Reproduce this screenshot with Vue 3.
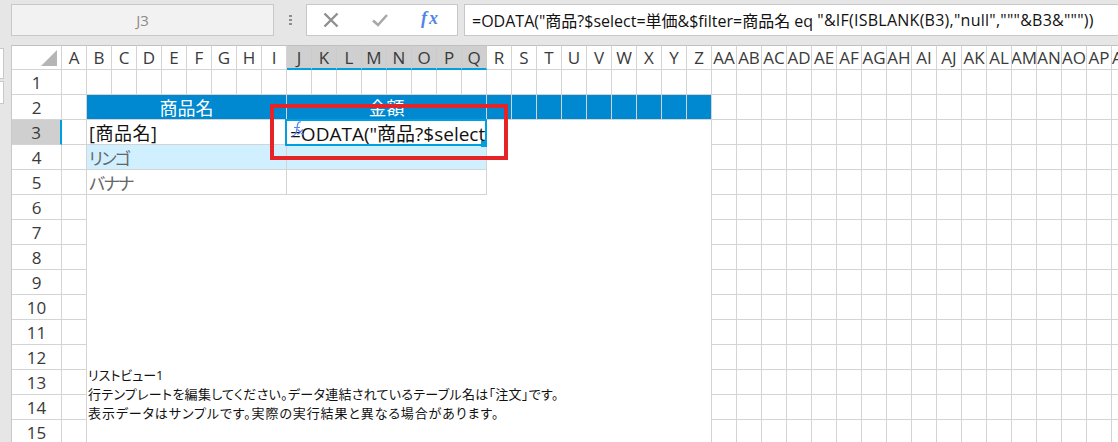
<script setup>
import { computed } from 'vue'

const COLS = 43
const ROWS = 16
const colName = i => i < 26 ? String.fromCharCode(65 + i) : 'A' + String.fromCharCode(65 + i - 26)
const columns = Array.from({ length: COLS }, (_, i) => colName(i))
const rowsList = Array.from({ length: ROWS }, (_, i) => i + 1)

// merged areas: c/r are 1-based sheet column / row, w/h their span
const merges = [
  { c: 2, r: 2, w: 8, h: 1, cls: 'head', text: '商品名' },
  { c: 10, r: 2, w: 8, h: 1, cls: 'head', text: '金額' },
  { c: 2, r: 3, w: 8, h: 1, cls: 'field', text: '[商品名]' },
  { c: 10, r: 3, w: 8, h: 1, cls: 'active', text: '' },
  { c: 2, r: 4, w: 8, h: 1, cls: 'sample tint', text: 'リンゴ' },
  { c: 10, r: 4, w: 8, h: 1, cls: 'tint', text: '' },
  { c: 2, r: 5, w: 8, h: 1, cls: 'sample', text: 'バナナ' },
  { c: 10, r: 5, w: 8, h: 1, cls: '', text: '' },
  { c: 18, r: 3, w: 9, h: 3, cls: 'blank', text: '' },
  { c: 2, r: 6, w: 25, h: 11, cls: 'note', text: '' }
]

const covered = (c, r) => merges.some(m => c >= m.c && c < m.c + m.w && r >= m.r && r < m.r + m.h)

const plainCells = computed(() => {
  const out = []
  for (const r of rowsList) {
    for (let c = 1; c <= COLS; c++) {
      if (!covered(c, r)) {
        const blue = r === 2 && c >= 18 && c <= 26
        out.push({ key: `${c}-${r}`, blue, style: { gridColumn: c + 1, gridRow: r + 1 } })
      }
    }
  }
  return out
})

const mergedCells = merges.map(m => ({
  ...m,
  style: { gridColumn: `${m.c + 1} / span ${m.w}`, gridRow: `${m.r + 1} / span ${m.h}` }
}))

const noteLines = [
  { text: 'リストビュー1', spacing: 0 },
  { text: '行テンプレートを編集してください。データ連結されているテーブル名は「注文」です。', spacing: 0.3 },
  { text: '表示データはサンプルです。実際の実行結果と異なる場合があります。', spacing: 0.9 }
]
</script>

<template>
  <div class="app">
    <div class="bar">
      <div class="namebox">J3</div>
      <div class="grip"><i></i><i></i><i></i></div>
      <div class="fxbox">
        <svg class="ic" width="16" height="16" viewBox="0 0 16 16"><path d="M1.5 1.5 L14.5 14.5 M14.5 1.5 L1.5 14.5" stroke="#8f8f8f" stroke-width="2.4" fill="none"/></svg>
        <svg class="ic" width="16" height="14" viewBox="0 0 16 14"><path d="M1 7.5 L6 12 L15 2" stroke="#a8a8a8" stroke-width="2.6" fill="none"/></svg>
        <span class="fx">fx</span>
      </div>
      <div class="formula"><span>=ODATA("商品?$select=単価&amp;$filter=商品名 eq </span><span class="tail">"&amp;IF(ISBLANK(B3),"null","""&amp;B3&amp;"""))</span></div>
    </div>
    <div class="main">
      <div class="rail"><i></i><i></i></div>
      <div class="sheet">
        <div class="grid">
          <div class="corner"><svg width="16" height="16" viewBox="0 0 16 16"><path d="M16 0 V16 H0 Z" fill="#b5b5b5"/></svg></div>
          <div
            v-for="(name, i) in columns"
            :key="name"
            class="colhead"
            :class="{ sel: i >= 9 && i <= 16 }"
          ><span>{{ name }}</span></div>
          <div
            v-for="r in rowsList"
            :key="'r' + r"
            class="rowhead"
            :class="{ sel: r === 3 }"
          >{{ r }}</div>
          <div
            v-for="cell in plainCells"
            :key="cell.key"
            class="cell"
            :class="{ bluecell: cell.blue }"
            :style="cell.style"
          ></div>
          <div
            v-for="m in mergedCells"
            :key="m.c + '_' + m.r"
            class="cell merged"
            :class="m.cls"
            :style="m.style"
          >
            <template v-if="m.cls === 'active'">
              <div class="editor">
                <span class="edit-text">=ODATA("商品?$select</span>
                <span class="mark">
                  <svg width="15" height="19" viewBox="0 0 15 19"><path d="M11 1 C8 0 7.5 3 7 7 C6.6 11 6 15 2 15 M4 6.5 H10 M7.5 8.5 L13 13.5 M13 8.5 L7.5 13.5" stroke="#5c82ee" stroke-width="1.2" fill="none"/></svg>
                </span>
              </div>
              <i class="handle"></i>
            </template>
            <template v-else-if="m.cls === 'note'">
              <div class="notes">
                <div
                  v-for="line in noteLines"
                  :key="line.text"
                  :style="{ letterSpacing: line.spacing + 'px' }"
                >{{ line.text }}</div>
              </div>
            </template>
            <template v-else>{{ m.text }}</template>
          </div>
          <div class="redbox"></div>
        </div>
      </div>
    </div>
  </div>
</template>

<style>
html, body { margin: 0; background: #e6e6e6; overflow: hidden; }
</style>

<style scoped>
.app {
  width: 1118px;
  height: 442px;
  overflow: hidden;
  background: #e6e6e6;
  font-family: "Open Sans", "Noto Sans CJK JP", sans-serif;
  color: #222;
}
.bar {
  display: flex;
  align-items: center;
  height: 45px;
  padding: 0 0 5px 11px;
  box-sizing: border-box;
}
.namebox {
  width: 263px;
  height: 32px;
  box-sizing: border-box;
  background: #f2f2f2;
  border: 1px solid #c8c8c8;
  display: flex;
  align-items: center;
  justify-content: center;
  font-size: 15px;
  color: #8a8a8a;
}
.grip {
  width: 32px;
  display: flex;
  flex-direction: column;
  align-items: center;
  gap: 2px;
}
.grip i { width: 3px; height: 2px; background: #8e8e8e; display: block; }
.fxbox {
  width: 152px;
  height: 32px;
  box-sizing: border-box;
  background: #fff;
  border: 1px solid #c8c8c8;
  display: flex;
  align-items: center;
  padding-left: 16px;
  gap: 33px;
}
.fx {
  font: italic 700 18px "Liberation Serif", serif;
  color: #4f86e6;
  letter-spacing: 2px;
  margin-top: -3px;
}
.formula {
  margin-left: 6px;
  flex: 1;
  height: 32px;
  box-sizing: border-box;
  background: #fff;
  border: 1px solid #c8c8c8;
  border-right: 0;
  padding-left: 7px;
  display: flex;
  align-items: center;
  font-size: 16px;
  color: #111;
  white-space: pre;
  overflow: hidden;
}
.tail { letter-spacing: 0.25px; }
.main { display: flex; height: 397px; }
.rail { width: 11px; padding-top: 3px; box-sizing: border-box; }
.rail i { display: block; width: 3px; height: 29px; background: #fff; border: 1px solid #c8c8c8; border-left: 0; margin-bottom: 2px; }
.rail i + i { height: 21px; }
.sheet { flex: 1; overflow: hidden; background: #fff; border-left: 1px solid #c8c8c8; min-width: 0; }
.grid {
  position: relative;
  display: grid;
  grid-template-columns: 50px repeat(43, 25px);
  grid-template-rows: repeat(17, 25px);
  width: max-content;
}
.corner {
  grid-column: 1;
  grid-row: 1;
  background: #fff;
  border-right: 1px solid #d4d4d4;
  border-bottom: 1px solid #d4d4d4;
  border-top: 1px solid #c0c0c0;
  box-sizing: border-box;
  display: flex;
  align-items: flex-end;
  justify-content: flex-end;
  padding: 0 4px 3px 0;
}
.colhead {
  grid-row: 1;
  box-sizing: border-box;
  border-right: 1px solid #d4d4d4;
  border-bottom: 1px solid #d4d4d4;
  border-top: 1px solid #c0c0c0;
  display: flex;
  align-items: center;
  justify-content: center;
  overflow: hidden;
  font-size: 17px;
  color: #3a3a3a;
  white-space: nowrap;
}
.colhead.sel {
  background: #cfcfcf;
  border-right-color: #cbcbcb;
  border-bottom: 2px solid #00a0e0;
}
.rowhead {
  grid-column: 1;
  box-sizing: border-box;
  border-right: 1px solid #d4d4d4;
  border-bottom: 1px solid #d4d4d4;
  display: flex;
  align-items: center;
  justify-content: center;
  font-size: 17px;
  color: #3a3a3a;
}
.rowhead.sel {
  background: #cfcfcf;
  border-right: 2px solid #00a0e0;
}
.cell {
  box-sizing: border-box;
  border-right: 1px solid #d4d4d4;
  border-bottom: 1px solid #d4d4d4;
  background: #fff;
}
.bluecell { background: #0088d0; }
.merged {
  font-size: 18px;
  display: flex;
  align-items: center;
  overflow: hidden;
  white-space: nowrap;
  padding-left: 2px;
}
.head {
  background: #0088d0;
  color: #fff;
  justify-content: center;
  padding-left: 0;
}
.field { color: #111; letter-spacing: 0.5px; }
.tint { background: #d0f0ff; }
.sample { color: #666; font-size: 17px; font-feature-settings: "palt"; letter-spacing: -1.5px; }
.blank { border-bottom: 0; }
.note {
  border-bottom: 0;
  align-items: flex-start;
  padding-left: 1px;
}
.notes {
  margin-top: 171px;
  font-size: 13px;
  line-height: 19px;
  color: #111;
  font-feature-settings: "palt";
}
.active {
  position: relative;
  padding: 0;
  overflow: visible;
}
.editor {
  position: absolute;
  left: -2px;
  top: -1px;
  width: 202px;
  height: 27px;
  box-sizing: border-box;
  border: 2px solid #00a0e0;
  background: #fff;
  display: flex;
  align-items: center;
  overflow: hidden;
  padding-left: 3px;
  font-size: 19px;
  color: #111;
}
.mark { position: absolute; left: 3px; top: 0; line-height: 0; }
.edit-text { white-space: nowrap; }
.handle {
  position: absolute;
  left: 194px;
  top: 21px;
  width: 6px;
  height: 6px;
  background: #00a0e0;
}
.redbox {
  position: absolute;
  left: 258px;
  top: 59px;
  width: 238px;
  height: 56px;
  box-sizing: border-box;
  border: 4px solid #e52428;
  pointer-events: none;
}
</style>
